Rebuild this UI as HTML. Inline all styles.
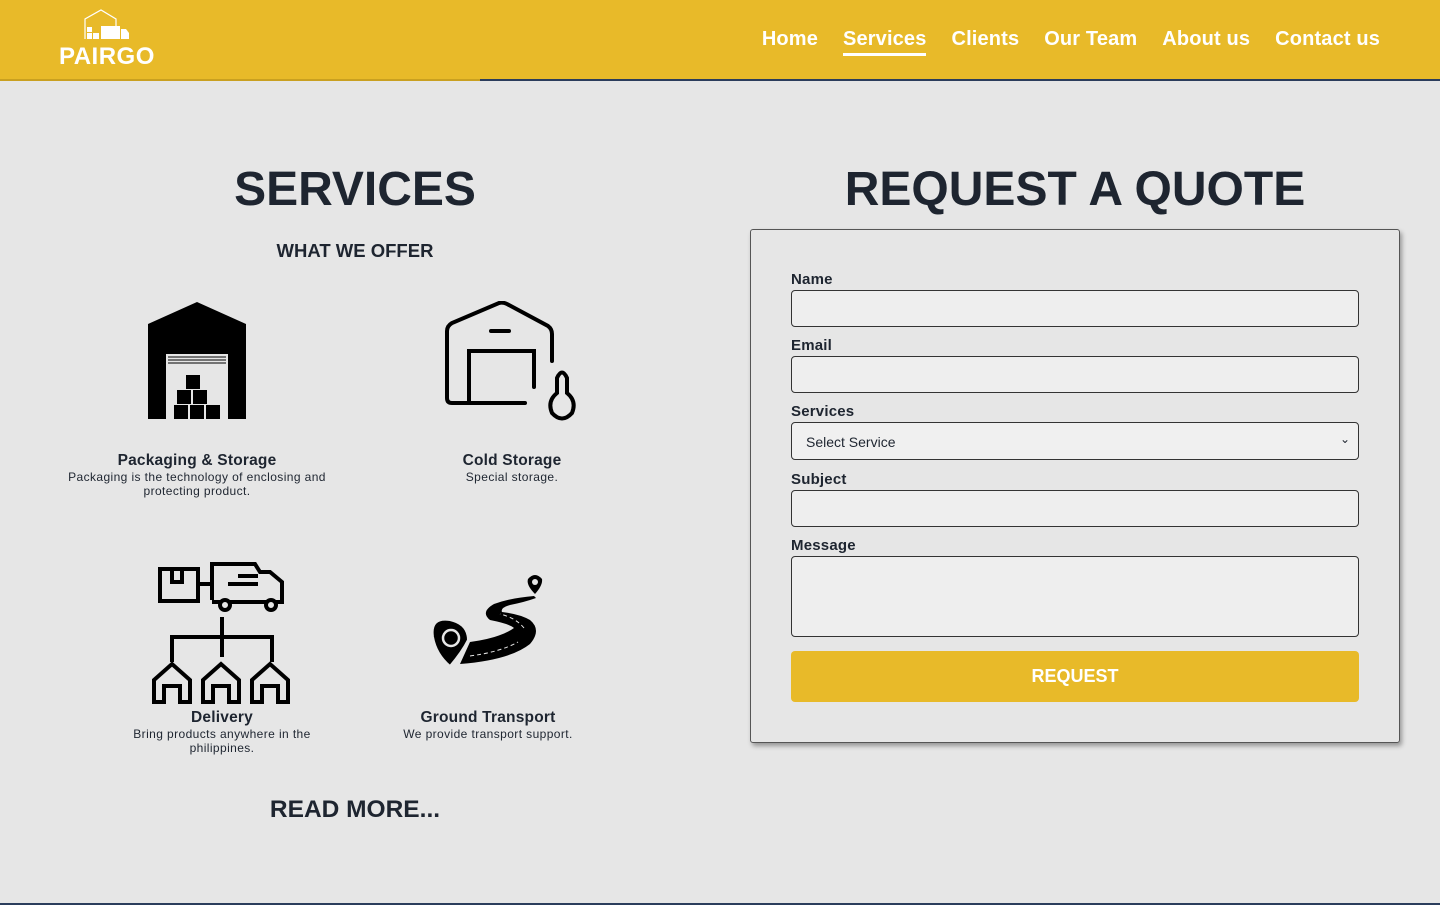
<!DOCTYPE html>
<html><head><meta charset="utf-8"><style>
*{box-sizing:border-box;margin:0;padding:0}
body{width:1440px;height:905px;background:#e6e6e6;font-family:"Liberation Sans",sans-serif;color:#1e2530;position:relative;overflow:hidden}
.hdr{position:absolute;left:0;top:0;width:1440px;height:81px;background:#e8ba29;border-bottom:2px solid #c9a020}
.hdr:after{content:"";position:absolute;left:480px;right:0;bottom:-2px;height:2px;background:#2b3d5c}
.logo{position:absolute;left:59px;top:43px;color:#fff;font-weight:bold;font-size:24px;letter-spacing:0.5px}
.nav{position:absolute;top:28px;right:60px;display:flex;gap:25px}
.nav a{color:#fff;font-weight:bold;font-size:20px;letter-spacing:0.15px;text-decoration:none;padding-bottom:2px}
.nav a.act{border-bottom:3px solid #fff}
h1{position:absolute;font-size:48px;font-weight:bold;text-align:center}
.sub{position:absolute;left:0;width:710px;top:240px;text-align:center;font-weight:bold;font-size:18.5px}
.item{position:absolute;text-align:center}
.item b{display:block;font-size:15.5px;letter-spacing:0.2px}
.item p{font-size:12px;line-height:14px;letter-spacing:0.4px}
.form{position:absolute;left:750px;top:229px;width:650px;height:514px;border:1px solid #555;border-radius:3px;box-shadow:2px 3px 5px rgba(0,0,0,.35)}
.lbl{position:absolute;left:40px;font-weight:bold;font-size:15px;letter-spacing:0.2px}
.inp{position:absolute;left:40px;width:568px;height:37px;border:1px solid #333;border-radius:4px;background:#eee}
.btn{position:absolute;left:40px;top:421px;width:568px;height:51px;background:#e8ba29;border-radius:4px;color:#fff;font-weight:bold;font-size:18px;text-align:center;line-height:51px}
</style></head><body>
<div class="hdr">
<svg style="position:absolute;left:84px;top:9px" width="46" height="33" viewBox="0 0 46 33"><path d="M1 30V10L17 1 32 10V17" fill="none" stroke="#fff" stroke-width="1.2"/><rect x="3" y="18" width="5" height="5" fill="#fff"/><rect x="3" y="24" width="5" height="6" fill="#fff"/><rect x="9" y="24" width="6" height="6" fill="#fff"/><rect x="17" y="17" width="19" height="13" fill="#fff"/><path d="M37 20h5l3 4v6h-8z" fill="#fff"/></svg>
<div class="logo">PAIRGO</div>
<div class="nav"><a>Home</a><a class="act">Services</a><a>Clients</a><a>Our Team</a><a>About us</a><a>Contact us</a></div>
</div>
<h1 style="left:0;width:710px;top:162px">SERVICES</h1>
<div class="sub">WHAT WE OFFER</div>
<h1 style="left:750px;width:650px;top:162px">REQUEST A QUOTE</h1>

<svg style="position:absolute;left:148px;top:302px" width="98" height="118" viewBox="0 0 98 118"><path d="M0 22L49 0 98 22V117H80V52H18V117H0Z" fill="#000"/><g stroke="#000" stroke-width="1"><path d="M20 55H78M20 58H78M20 61H78"/></g><g fill="#000"><rect x="38" y="73" width="14" height="14"/><rect x="29" y="88" width="14" height="14"/><rect x="45" y="88" width="14" height="14"/><rect x="26" y="103" width="14" height="14"/><rect x="42" y="103" width="14" height="14"/><rect x="58" y="103" width="14" height="14"/></g></svg>
<div class="item" style="left:47px;width:300px;top:452px"><b>Packaging &amp; Storage</b><p>Packaging is the technology of enclosing and<br>protecting product.</p></div>

<svg style="position:absolute;left:445px;top:301px" width="135" height="122" viewBox="0 0 135 122" fill="none" stroke="#000" stroke-width="4" stroke-linecap="round"><path d="M28 102H7Q2 102 2 97V30Q2 25 7 22L54 2Q58 1 62 3L103 25Q107 28 107 33V60"/><path d="M46 30H64"/><path d="M24 102V50H89V86"/><path d="M24 102H80"/><path d="M112 92V77Q117 66 122 77V92Q132 100 127 112Q117 123 107 112Q102 100 112 92Z"/></svg>
<div class="item" style="left:412px;width:200px;top:452px"><b>Cold Storage</b><p>Special storage.</p></div>

<svg style="position:absolute;left:150px;top:562px" width="145" height="142" viewBox="0 0 145 142" fill="none" stroke="#000" stroke-width="4"><rect x="10" y="7" width="38" height="32"/><path d="M22 7V20H32V7"/><path d="M48 22H62"/><path d="M62 38V2H105L110 10H120L132 20V40H62"/><path d="M88 14H108M78 22H108"/><circle cx="75" cy="43" r="5" fill="#e6e6e6"/><circle cx="121" cy="43" r="5" fill="#e6e6e6"/><path d="M72 55V95M22 100V75H122V100"/><g id="h"><path d="M4 140V118L22 102 40 118V140H30V124H14V140Z"/></g><use href="#h" x="49"/><use href="#h" x="98"/></svg>
<div class="item" style="left:122px;width:200px;top:709px"><b>Delivery</b><p>Bring products anywhere in the<br>philippines.</p></div>

<svg style="position:absolute;left:430px;top:572px" width="115" height="97" viewBox="0 0 115 97"><path d="M104 24Q80 26 64 32Q50 40 60 48Q80 52 84 56Q70 66 40 70L30 92Q80 88 100 72Q112 58 100 48Q90 42 72 40Q70 36 80 33Q95 30 106 26Z" fill="#000"/><path d="M40 84Q70 80 88 70M94 56Q86 46 70 42" fill="none" stroke="#e6e6e6" stroke-width="1" stroke-dasharray="4 3"/><path d="M3 65Q0 45 20 48Q38 52 38 68Q32 80 20 94Q6 82 3 65Z" fill="#000" stroke="#e6e6e6" stroke-width="2"/><circle cx="21" cy="66" r="8" fill="none" stroke="#e6e6e6" stroke-width="2.5"/><path d="M105 22Q96 13 98 7Q105 -1 112 7Q113 13 105 22Z" fill="#000"/><circle cx="105" cy="10" r="3" fill="#e6e6e6"/></svg>
<div class="item" style="left:388px;width:200px;top:709px"><b>Ground Transport</b><p>We provide transport support.</p></div>

<div style="position:absolute;left:0;width:710px;top:796px;text-align:center;font-weight:bold;font-size:24.5px">READ MORE...</div>

<div class="form">
<div class="lbl" style="top:41px">Name</div><div class="inp" style="top:60px"></div>
<div class="lbl" style="top:107px">Email</div><div class="inp" style="top:126px"></div>
<div class="lbl" style="top:173px">Services</div><div class="inp" style="top:192px;height:38px;background:#f0f0f0;font-size:14px;padding:11px 0 0 14px">Select Service<span style="position:absolute;right:8px;top:9px;font-size:12px">&#8964;</span></div>
<div class="lbl" style="top:241px">Subject</div><div class="inp" style="top:260px"></div>
<div class="lbl" style="top:307px">Message</div><div class="inp" style="top:326px;height:81px"></div>
<div class="btn">REQUEST</div>
</div>
<div style="position:absolute;left:0;bottom:0;width:1440px;height:2px;background:#2b3d5c"></div>
</body></html>
